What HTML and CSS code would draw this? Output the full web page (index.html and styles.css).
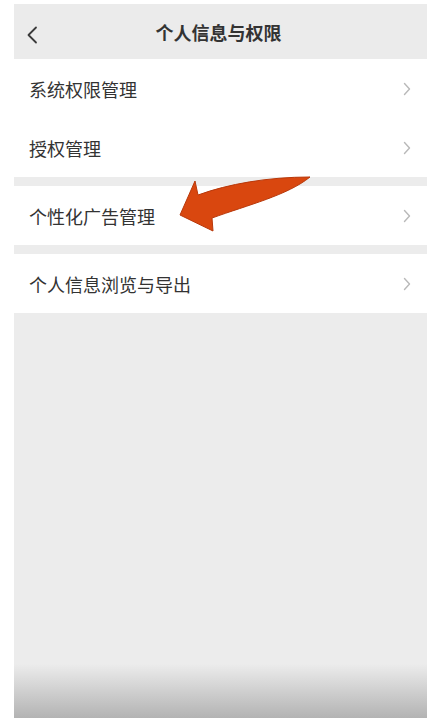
FILE: index.html
```html
<!DOCTYPE html>
<html lang="zh">
<head>
<meta charset="utf-8">
<title>个人信息与权限</title>
<link rel="stylesheet" href="styles.css">
</head>
<body>
<div class="screen">
  <header class="topbar">
    <svg class="back" width="12" height="18" viewBox="0 0 12 18"><path d="M10 1.5 L2.5 9 L10 16.5" fill="none" stroke="#3a3a3a" stroke-width="1.8" stroke-linecap="round" stroke-linejoin="round"/></svg>
    <h1 class="title">个人信息与权限</h1>
  </header>
  <section class="group">
    <div class="row"><span>系统权限管理</span><svg class="chev" width="8" height="14" viewBox="0 0 8 14"><path d="M1.5 1.5 L6.5 7 L1.5 12.5" fill="none" stroke="#b9b9b9" stroke-width="1.4" stroke-linecap="round" stroke-linejoin="round"/></svg></div>
    <div class="row"><span>授权管理</span><svg class="chev" width="8" height="14" viewBox="0 0 8 14"><path d="M1.5 1.5 L6.5 7 L1.5 12.5" fill="none" stroke="#b9b9b9" stroke-width="1.4" stroke-linecap="round" stroke-linejoin="round"/></svg></div>
  </section>
  <section class="group">
    <div class="row"><span>个性化广告管理</span><svg class="chev" width="8" height="14" viewBox="0 0 8 14"><path d="M1.5 1.5 L6.5 7 L1.5 12.5" fill="none" stroke="#b9b9b9" stroke-width="1.4" stroke-linecap="round" stroke-linejoin="round"/></svg></div>
  </section>
  <section class="group">
    <div class="row"><span>个人信息浏览与导出</span><svg class="chev" width="8" height="14" viewBox="0 0 8 14"><path d="M1.5 1.5 L6.5 7 L1.5 12.5" fill="none" stroke="#b9b9b9" stroke-width="1.4" stroke-linecap="round" stroke-linejoin="round"/></svg></div>
  </section>
  <svg class="arrow" width="150" height="70" viewBox="0 0 150 70">
    <path d="M12 46 L27 12 L30 26 C 60 15, 100 8, 142 8 C 120 26, 80 36, 44 49 L45 62 Z" fill="#d9470f" stroke="#b8380a" stroke-width="1" stroke-linejoin="round"/>
  </svg>
</div>
</body>
</html>
```
FILE: styles.css
```css
html, body {
  margin: 0;
  padding: 0;
  background: #ffffff;
}
body {
  font-family: "Noto Sans CJK SC", "Noto Sans", sans-serif;
  color: #333333;
}
.screen {
  position: relative;
  margin: 4px 0 0 14px;
  width: 413px;
  height: 714px;
  background: linear-gradient(to bottom, #ececec 0, #ececec 660px, #b3b3b3 714px);
  display: flex;
  flex-direction: column;
  gap: 9px;
  overflow: hidden;
}
.topbar {
  height: 55px;
  background: #ebebeb;
  display: flex;
  align-items: center;
  justify-content: center;
  position: relative;
  margin-bottom: -9px;
}
.back {
  position: absolute;
  left: 12px;
  top: 22px;
}
.title {
  margin: 0 0 0 -4px;
  font-size: 18px;
  font-weight: 700;
  color: #333;
}
.group {
  background: #ffffff;
  display: flex;
  flex-direction: column;
}
.row {
  height: 59px;
  display: flex;
  align-items: center;
  justify-content: space-between;
  padding: 0 16px 0 15px;
  font-size: 18px;
  color: #333;
}
.chev {
  flex: none;
}
.arrow {
  position: absolute;
  left: 154px;
  top: 165px;
}
```
